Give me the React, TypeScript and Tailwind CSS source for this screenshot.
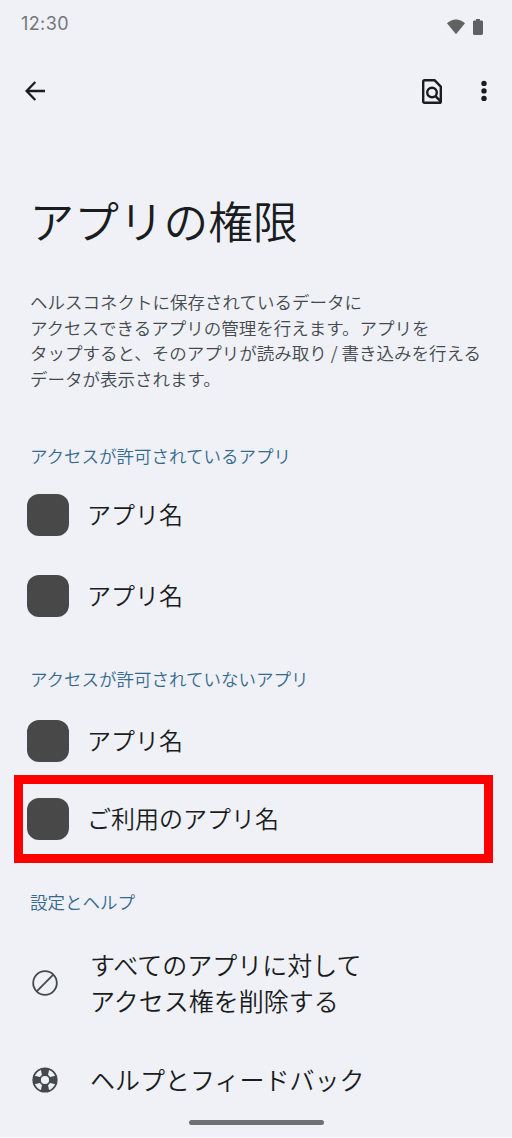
import { type ReactNode } from 'react';

function SectionTitle({ children }: { children: ReactNode }) {
  return <h2 className="h-6 pl-[30px] text-[17.5px] leading-6 text-[#356a8e]">{children}</h2>;
}

function AppRow({ name }: { name: string }) {
  return (
    <div className="flex h-[42px] items-center gap-[18px] pl-[27px]">
      <div className="size-[42px] shrink-0 rounded-[12px] bg-[#484848]" />
      <span className="pb-px text-[24px] leading-[40px] whitespace-nowrap">{name}</span>
    </div>
  );
}

function StatusIcons() {
  return (
    <div className="flex items-center gap-[8px] text-[#616163]">
      <svg width="18" height="16" viewBox="0 0 18 16" fill="currentColor">
        <path d="M0 4.3C5.2-.9 12.8-.9 18 4.3L9 15.3z" />
      </svg>
      <svg width="10" height="16" viewBox="0 0 10 16" fill="currentColor">
        <path d="M3 0h4v1.5h1.6c.8 0 1.4.6 1.4 1.4v11.7c0 .8-.6 1.4-1.4 1.4H1.4C.6 16 0 15.4 0 14.6V2.9c0-.8.6-1.4 1.4-1.4H3z" />
      </svg>
    </div>
  );
}

function BackIcon() {
  return (
    <svg width="20" height="20" viewBox="0 0 20 20" fill="none" stroke="currentColor" strokeWidth="2.3">
      <path d="M20 10H1.8M10.3 1L1.6 10l8.7 9" />
    </svg>
  );
}

function FindInPageIcon() {
  return (
    <svg width="20" height="25" viewBox="0 0 20 25" fill="none" stroke="currentColor" strokeWidth="2.4">
      <path d="M18.8 21.8V7.6L12.5 1.2H2.7c-.9 0-1.5.6-1.5 1.5v19.6c0 .9.6 1.5 1.5 1.5h14.6c.8 0 1.5-.6 1.5-1.4z" strokeLinejoin="round" />
      <circle cx="10" cy="13.5" r="4.8" />
      <path d="M13.2 16.8l5.5 5.6" />
    </svg>
  );
}

function BlockIcon() {
  return (
    <svg width="26" height="26" viewBox="0 0 26 26" fill="none" stroke="currentColor" strokeWidth="1.8">
      <circle cx="13" cy="13" r="11.8" />
      <path d="M4.7 21.3L21.3 4.7" />
    </svg>
  );
}

function HelpIcon() {
  return (
    <svg width="26" height="26" viewBox="0 0 26 26" fill="none" stroke="currentColor">
      <circle cx="13" cy="13" r="11.7" strokeWidth="1.8" />
      <circle cx="13" cy="13" r="5" strokeWidth="1.8" />
      <g fill="currentColor" stroke="none">
        <path d="M8.6 1.5h8.8l-1.6 7.5a5 5 0 0 0-5.6 0z" />
        <path d="M8.6 24.5h8.8l-1.6-7.5a5 5 0 0 1-5.6 0z" />
        <path d="M1.5 8.6v8.8l7.5-1.6a5 5 0 0 1 0-5.6z" />
        <path d="M24.5 8.6v8.8l-7.5-1.6a5 5 0 0 0 0-5.6z" />
      </g>
    </svg>
  );
}

export default function App() {
  return (
    <div className="flex h-[1138px] w-[512px] flex-col overflow-hidden border-b border-[#fafbfd] bg-[#eff1f7] font-['Noto_Sans_CJK_JP',sans-serif] font-[350] text-[#191c20]">
      <div className="flex h-12 shrink-0 items-center justify-between pr-[29px] pl-[21px]">
        <span className="font-['Inter',sans-serif] text-[18px] leading-6 font-normal tracking-[0.4px] text-[#757679]">12:30</span>
        <div className="pt-[6px]">
          <StatusIcons />
        </div>
      </div>

      <header className="flex h-[86px] shrink-0 items-center justify-between pr-[25px] pl-[25px]">
        <button aria-label="戻る">
          <BackIcon />
        </button>
        <div className="flex items-center gap-[39px]">
          <button aria-label="検索">
            <FindInPageIcon />
          </button>
          <button aria-label="メニュー">
            <svg width="6" height="22" viewBox="0 0 6 22" fill="currentColor">
              <circle cx="3" cy="3.4" r="2.7" />
              <circle cx="3" cy="10.9" r="2.7" />
              <circle cx="3" cy="18.4" r="2.7" />
            </svg>
          </button>
        </div>
      </header>

      <h1 className="mt-[54px] h-16 shrink-0 pl-[29.5px] text-[44.7px] leading-[64px]">アプリの権限</h1>

      <p className="mt-[37px] shrink-0 pl-[30px] text-[17.5px] leading-[25.7px] whitespace-nowrap text-[#44494e]">
        ヘルスコネクトに保存されているデータに
        <br />
        アクセスできるアプリの管理を行えます。アプリを
        <br />
        タップすると、そのアプリが読み取り / 書き込みを行える
        <br />
        データが表示されます。
      </p>

      <section className="mt-[52px] shrink-0">
        <SectionTitle>アクセスが許可されているアプリ</SectionTitle>
        <div className="mt-[26px] flex flex-col gap-[39px]">
          <AppRow name="アプリ名" />
          <AppRow name="アプリ名" />
        </div>
      </section>

      <section className="mt-[50px] shrink-0">
        <SectionTitle>アクセスが許可されていないアプリ</SectionTitle>
        <div className="mt-[29px]">
          <AppRow name="アプリ名" />
        </div>
        <div className="mt-[13px] ml-[14px] flex h-[88px] w-[479px] items-center border-[9px] border-[#ff0000]">
          <div className="-ml-[23px]">
            <AppRow name="ご利用のアプリ名" />
          </div>
        </div>
      </section>

      <section className="mt-[27px] shrink-0">
        <SectionTitle>設定とヘルプ</SectionTitle>
        <div className="mt-[32px] flex h-[72px] items-center gap-[32px] pl-[32px]">
          <span className="pt-[2px] text-[#44494e]">
            <BlockIcon />
          </span>
          <p className="text-[25px] leading-[36px] whitespace-nowrap">
            すべてのアプリに対して
            <br />
            アクセス権を削除する
          </p>
        </div>
        <div className="mt-[43px] flex h-[36px] items-center gap-[32px] pl-[32px]">
          <span className="pt-[2px] text-[#44494e]">
            <HelpIcon />
          </span>
          <span className="text-[25px] leading-[36px] whitespace-nowrap">ヘルプとフィードバック</span>
        </div>
      </section>

      <div className="mx-auto mt-[23px] h-[5px] w-[135px] shrink-0 rounded-full bg-[#707072]" />
    </div>
  );
}
